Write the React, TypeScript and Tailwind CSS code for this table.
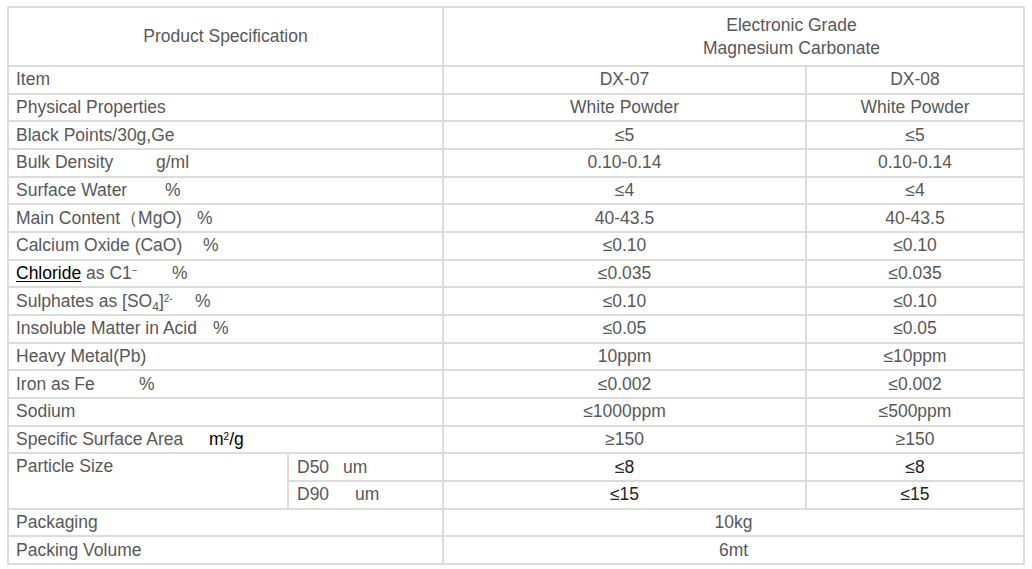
import React from "react";

type Row = {
  label: React.ReactNode;
  a: React.ReactNode;
  b?: React.ReactNode;
};

const Unit = ({ w, text, unit }: { w: string; text: React.ReactNode; unit: React.ReactNode }) => (
  <>
    <span className={`inline-block ${w}`}>{text}</span>
    {unit}
  </>
);

const rows: Row[] = [
  { label: "Item", a: "DX-07", b: "DX-08" },
  { label: "Physical Properties", a: "White Powder", b: "White Powder" },
  { label: "Black Points/30g,Ge", a: "≤5", b: "≤5" },
  { label: <Unit w="w-[140px]" text="Bulk Density" unit="g/ml" />, a: "0.10-0.14", b: "0.10-0.14" },
  { label: <Unit w="w-[149px]" text="Surface Water" unit="%" />, a: "≤4", b: "≤4" },
  { label: <Unit w="w-[181px]" text="Main Content（MgO)" unit="%" />, a: "40-43.5", b: "40-43.5" },
  { label: <Unit w="w-[187px]" text="Calcium Oxide (CaO)" unit="%" />, a: "≤0.10", b: "≤0.10" },
  {
    label: (
      <Unit
        w="w-[156px]"
        text={
          <>
            <span className="text-black underline underline-offset-2">Chloride</span> as C1
            <sup className="text-[10px]">−</sup>
          </>
        }
        unit="%"
      />
    ),
    a: "≤0.035",
    b: "≤0.035",
  },
  {
    label: (
      <Unit
        w="w-[179px]"
        text={
          <>
            Sulphates as [SO<sub className="text-[12px] align-[-1px]">4</sub>]
            <sup className="text-[10px]">2-</sup>
          </>
        }
        unit="%"
      />
    ),
    a: "≤0.10",
    b: "≤0.10",
  },
  { label: <Unit w="w-[197px]" text="Insoluble Matter in Acid" unit="%" />, a: "≤0.05", b: "≤0.05" },
  { label: "Heavy Metal(Pb)", a: "10ppm", b: "≤10ppm" },
  { label: <Unit w="w-[123px]" text="Iron as Fe" unit="%" />, a: "≤0.002", b: "≤0.002" },
  { label: "Sodium", a: "≤1000ppm", b: "≤500ppm" },
  {
    label: (
      <Unit
        w="w-[193px]"
        text="Specific Surface Area"
        unit={
          <span className="text-black">
            m<sup className="text-[10px]">2</sup>/g
          </span>
        }
      />
    ),
    a: "≥150",
    b: "≥150",
  },
];

const cell = "bg-white flex items-center";

export default function App() {
  return (
    <div className="w-[1032px] h-[569px] bg-white pl-[7px] pt-[6px] text-[17.5px] text-[#585858] font-['Liberation_Sans',Arial,sans-serif]">
      <div className="grid w-[1018px] h-[559px] bg-[#dcdcdc] p-[2px] gap-[2px] grid-cols-[278px_153px_361px_216px] grid-rows-[57px_repeat(18,1fr)] leading-[23px]">
        <div className={`${cell} col-span-2 justify-center`}>Product Specification</div>
        <div className={`${cell} col-span-2 justify-center pl-[116px] text-center`}>
          Electronic Grade
          <br />
          Magnesium Carbonate
        </div>

        {rows.map((r, i) => (
          <React.Fragment key={i}>
            <div className={`${cell} col-span-2 pl-[7px] whitespace-nowrap`}>{r.label}</div>
            <div className={`${cell} justify-center`}>{r.a}</div>
            <div className={`${cell} justify-center`}>{r.b}</div>
          </React.Fragment>
        ))}

        <div className="bg-white row-span-2 pl-[7px] pt-[1px]">Particle Size</div>
        <div className={`${cell} pl-[8px]`}>
          <Unit w="w-[46px]" text="D50" unit="um" />
        </div>
        <div className={`${cell} justify-center text-[#222]`}>≤8</div>
        <div className={`${cell} justify-center text-[#222]`}>≤8</div>
        <div className={`${cell} pl-[8px]`}>
          <Unit w="w-[58px]" text="D90" unit="um" />
        </div>
        <div className={`${cell} justify-center text-[#222]`}>≤15</div>
        <div className={`${cell} justify-center text-[#222]`}>≤15</div>

        <div className={`${cell} col-span-2 pl-[7px]`}>Packaging</div>
        <div className={`${cell} col-span-2 justify-center`}>10kg</div>
        <div className={`${cell} col-span-2 pl-[7px]`}>Packing Volume</div>
        <div className={`${cell} col-span-2 justify-center`}>6mt</div>
      </div>
    </div>
  );
}
